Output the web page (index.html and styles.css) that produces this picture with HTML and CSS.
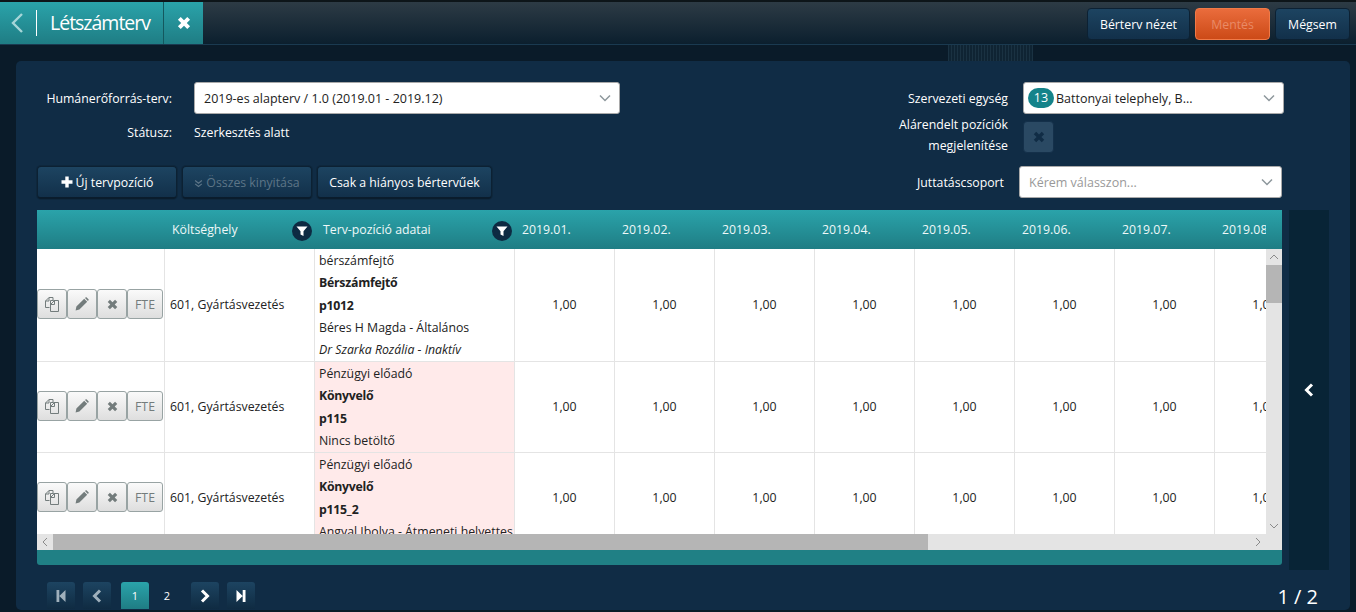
FILE: index.html
```html
<!DOCTYPE html>
<html lang="hu">
<head>
  <meta charset="UTF-8" />
  <title>Létszámterv</title>
  <link rel="stylesheet" href="styles.css">
</head>
<body>
  <svg class="icon-defs" width="0" height="0">
    <symbol id="i-x" viewBox="0 0 12 12"><path d="M.8 3.200 3.200.8 6 3.600 8.800.8l2.400 2.400L8.400 6l2.800 2.800-2.400 2.400L6 8.400l-2.800 2.800-2.400-2.400L3.600 6z" fill="currentColor"/></symbol>
    <symbol id="i-filter" viewBox="0 0 12 12"><path d="M.5 1.500h11L7.500 6.300V11L4.500 9.500V6.300z" fill="currentColor"/></symbol>
    <symbol id="i-copy" viewBox="0 0 16 16"><path d="M5.500 11.500h-4V5l3.500-3.500h4v3M5 1.500V5H1.500M6.500 4.500h3l5 0v11h-8zM6.500 8.500l4-4v4z" fill="none" stroke="currentColor"/></symbol>
    <symbol id="i-pencil" viewBox="0 0 14 14"><path d="M.6 13.400l.8-3.800L9.200 1.800l3 3-7.800 7.800zM10 1l.6-.5c.4-.3.8-.3 1.100 0l1.800 1.800c.3.300.3.7 0 1l-.6.700z" fill="currentColor"/></symbol>
    <symbol id="i-plus" viewBox="0 0 12 12"><path d="M4.300.5h3.400v3.800h3.800v3.400H7.700v3.800H4.300V7.700H.5V4.300h3.800z" fill="currentColor"/></symbol>
    <symbol id="i-double" viewBox="0 0 12 12"><path d="M1.500 2 6 5.500 10.500 2M1.500 6.500 6 10l4.500-3.500" fill="none" stroke="currentColor" stroke-width="1.600"/></symbol>
    <symbol id="i-left" viewBox="0 0 12 14"><path d="M9 1.500 3.500 7 9 12.500" fill="none" stroke="currentColor" stroke-width="3"/></symbol>
    <symbol id="i-right" viewBox="0 0 12 14"><path d="M3 1.500 8.500 7 3 12.500" fill="none" stroke="currentColor" stroke-width="3"/></symbol>
    <symbol id="i-first" viewBox="0 0 12 12"><path d="M1.500 0h2.800v12H1.500zM10.500 0v12L4.300 6z" fill="currentColor"/></symbol>
    <symbol id="i-last" viewBox="0 0 12 12"><path d="M7.700 0h2.800v12H7.700zM1.500 0v12l6.200-6z" fill="currentColor"/></symbol>
    <symbol id="i-caret" viewBox="0 0 12 8"><path d="M1 1.500 6 6.500l5-5" fill="none" stroke="currentColor" stroke-width="1.500"/></symbol>
  </svg>

  <!-- Top bar -->
  <div class="topbar">
    <div class="title-tab">
      <a class="back-btn" href="#"><svg width="16" height="26" viewBox="0 0 16 26"><path d="M13 4 4 13l9 9" fill="none" stroke="currentColor" stroke-width="2.400"/></svg></a>
      <h1>Létszámterv</h1>
      <a class="close-btn" href="#"><svg width="14" height="14"><use href="#i-x"/></svg></a>
    </div>
    <div class="top-actions">
      <button class="dark-btn">Bérterv nézet</button>
      <button class="save-btn">Mentés</button>
      <button class="dark-btn">Mégsem</button>
    </div>
  </div>

  <div class="panel">
    <!-- Filters -->
    <div class="filters">
      <div class="filter-left">
        <div class="field-row">
          <label>Humánerőforrás-terv:</label>
          <div class="select wide"><span>2019-es alapterv / 1.0 (2019.01 - 2019.12)</span><svg width="12" height="8"><use href="#i-caret"/></svg></div>
        </div>
        <div class="field-row status-row">
          <label>Státusz:</label>
          <span class="status-text">Szerkesztés alatt</span>
        </div>
        <div class="button-row">
          <button class="dark-btn new-btn"><svg width="12" height="12"><use href="#i-plus"/></svg>Új tervpozíció</button>
          <button class="dark-btn expand-btn" disabled><svg width="9" height="9"><use href="#i-double"/></svg>Összes kinyitása</button>
          <button class="dark-btn missing-btn">Csak a hiányos bértervűek</button>
        </div>
      </div>
      <div class="filter-right">
        <div class="right-row">
          <label>Szervezeti egység</label>
          <div class="select unit"><span class="unit-text"><b class="badge">13</b>Battonyai telephely, B...</span><svg width="12" height="8"><use href="#i-caret"/></svg></div>
        </div>
        <div class="right-row sub-row">
          <label>Alárendelt pozíciók<br>megjelenítése</label>
          <button class="toggle-btn"><svg width="12" height="12"><use href="#i-x"/></svg></button>
        </div>
        <div class="right-row benefit-row">
          <label>Juttatáscsoport</label>
          <div class="select benefit"><span class="placeholder">Kérem válasszon...</span><svg width="12" height="8"><use href="#i-caret"/></svg></div>
        </div>
      </div>
    </div>

    <!-- Grid -->
    <div class="grid-area">
      <div class="grid">
        <div class="grid-head">
          <div class="row-inner">
            <div class="col-actions"></div>
            <div class="col-cost">Költséghely<span class="filter-dot"><svg width="12" height="12"><use href="#i-filter"/></svg></span></div>
            <div class="col-plan">Terv-pozíció adatai<span class="filter-dot"><svg width="12" height="12"><use href="#i-filter"/></svg></span></div>
            <div class="col-month">2019.01.</div>
            <div class="col-month">2019.02.</div>
            <div class="col-month">2019.03.</div>
            <div class="col-month">2019.04.</div>
            <div class="col-month">2019.05.</div>
            <div class="col-month">2019.06.</div>
            <div class="col-month">2019.07.</div>
            <div class="col-month">2019.08.</div>
          </div>
        </div>
        <div class="grid-middle">
          <div class="grid-rows">
            <div class="row-inner grid-row row-1">
              <div class="col-actions">
                <button class="tool-btn"><svg width="16" height="16"><use href="#i-copy"/></svg></button><button class="tool-btn"><svg width="14" height="14"><use href="#i-pencil"/></svg></button><button class="tool-btn"><svg width="11" height="11"><use href="#i-x"/></svg></button><button class="tool-btn fte">FTE</button>
              </div>
              <div class="col-cost">601, Gyártásvezetés</div>
              <div class="col-plan">
                <div>bérszámfejtő</div>
                <div><b>Bérszámfejtő</b></div>
                <div><b>p1012</b></div>
                <div>Béres H Magda - Általános</div>
                <div><i>Dr Szarka Rozália - Inaktív</i></div>
              </div>
              <div class="col-month">1,00</div><div class="col-month">1,00</div><div class="col-month">1,00</div><div class="col-month">1,00</div><div class="col-month">1,00</div><div class="col-month">1,00</div><div class="col-month">1,00</div><div class="col-month">1,00</div>
            </div>
            <div class="row-inner grid-row row-2">
              <div class="col-actions">
                <button class="tool-btn"><svg width="16" height="16"><use href="#i-copy"/></svg></button><button class="tool-btn"><svg width="14" height="14"><use href="#i-pencil"/></svg></button><button class="tool-btn"><svg width="11" height="11"><use href="#i-x"/></svg></button><button class="tool-btn fte">FTE</button>
              </div>
              <div class="col-cost">601, Gyártásvezetés</div>
              <div class="col-plan missing">
                <div>Pénzügyi előadó</div>
                <div><b>Könyvelő</b></div>
                <div><b>p115</b></div>
                <div>Nincs betöltő</div>
              </div>
              <div class="col-month">1,00</div><div class="col-month">1,00</div><div class="col-month">1,00</div><div class="col-month">1,00</div><div class="col-month">1,00</div><div class="col-month">1,00</div><div class="col-month">1,00</div><div class="col-month">1,00</div>
            </div>
            <div class="row-inner grid-row row-3">
              <div class="col-actions">
                <button class="tool-btn"><svg width="16" height="16"><use href="#i-copy"/></svg></button><button class="tool-btn"><svg width="14" height="14"><use href="#i-pencil"/></svg></button><button class="tool-btn"><svg width="11" height="11"><use href="#i-x"/></svg></button><button class="tool-btn fte">FTE</button>
              </div>
              <div class="col-cost">601, Gyártásvezetés</div>
              <div class="col-plan missing">
                <div>Pénzügyi előadó</div>
                <div><b>Könyvelő</b></div>
                <div><b>p115_2</b></div>
                <div>Angyal Ibolya - Átmeneti helyettes</div>
              </div>
              <div class="col-month">1,00</div><div class="col-month">1,00</div><div class="col-month">1,00</div><div class="col-month">1,00</div><div class="col-month">1,00</div><div class="col-month">1,00</div><div class="col-month">1,00</div><div class="col-month">1,00</div>
            </div>
          </div>
          <div class="vscroll">
            <svg class="arrow" width="10" height="6" viewBox="0 0 10 6"><path d="M1 5l4-4 4 4" fill="none" stroke="#8a8a8a"/></svg>
            <div class="vthumb"></div>
            <svg class="arrow arrow-down" width="10" height="6" viewBox="0 0 10 6"><path d="M1 1l4 4 4-4" fill="none" stroke="#8a8a8a"/></svg>
          </div>
        </div>
        <div class="hscroll">
          <svg class="arrow" width="6" height="10" viewBox="0 0 6 10"><path d="M5 1 1 5l4 4" fill="none" stroke="#8a8a8a"/></svg>
          <div class="hthumb"></div>
          <svg class="arrow" width="6" height="10" viewBox="0 0 6 10"><path d="M1 1l4 4-4 4" fill="none" stroke="#8a8a8a"/></svg>
        </div>
        <div class="grid-foot"></div>
      </div>
      <div class="side-toggle"><svg width="12" height="14"><use href="#i-left"/></svg></div>
    </div>

    <!-- Pager -->
    <div class="pager">
      <div class="pager-btns">
        <button class="page-btn dim"><svg width="12" height="12"><use href="#i-first"/></svg></button>
        <button class="page-btn dim"><svg width="12" height="14"><use href="#i-left"/></svg></button>
        <button class="page-num active">1</button>
        <button class="page-num">2</button>
        <button class="page-btn"><svg width="12" height="14"><use href="#i-right"/></svg></button>
        <button class="page-btn"><svg width="12" height="12"><use href="#i-last"/></svg></button>
      </div>
      <div class="page-count">1 / 2</div>
    </div>
  </div>
</body>
</html>
```

FILE: styles.css
```css
* {
  margin: 0;
  padding: 0;
  box-sizing: border-box;
}

body {
  font-family: "Open Sans", "Noto Sans", sans-serif;
  font-size: 12.3px;
  width: 1356px;
  height: 612px;
  overflow: hidden;
  color: #fff;
  background-color: #0a1b29;
  background-image: repeating-linear-gradient(90deg, #1a3242 0 1px, #0f2433 1px 3px);
  background-size: 85px 16px;
  background-position: 948px 45px;
  background-repeat: no-repeat;
}

button {
  font-family: inherit;
  cursor: pointer;
}

.icon-defs {
  display: block;
  height: 0;
}

/* Top bar */
.topbar {
  display: flex;
  justify-content: space-between;
  height: 45px;
  background: linear-gradient(#2d3b45, #0b1f2e);
  border-top: 2px solid #0d1519;
  border-bottom: 1px solid #1a3a50;
}

.title-tab {
  display: flex;
  align-items: center;
  height: 42px;
  background: linear-gradient(#2aa3aa, #1f7d84);
}

.back-btn {
  display: flex;
  width: 37px;
  padding-left: 9px;
  color: #a6d6d8;
  border-right: 1px solid #fff;
}

.title-tab h1 {
  font-size: 19.500px;
  font-weight: 400;
  width: 127px;
  padding-left: 13px;
  line-height: 42px;
  border-right: 1px solid #14585e;
  letter-spacing: -1px;
  white-space: nowrap;
}

.close-btn {
  display: flex;
  justify-content: center;
  width: 39px;
  color: #fff;
}

.top-actions {
  display: flex;
  gap: 5px;
  padding: 6px 6px 0 0;
}

.dark-btn {
  height: 32px;
  font-size: 12.3px;
  color: #fff;
  border: 1px solid #0c2133;
  border-radius: 4px;
  background: linear-gradient(#1d4461, #12304a);
}

.top-actions .dark-btn:first-child {
  width: 103px;
}

.top-actions .dark-btn:last-child {
  width: 75px;
}

.save-btn {
  width: 75px;
  height: 32px;
  font-size: 12.3px;
  color: #e98a66;
  border: 1px solid #f07a48;
  border-radius: 4px;
  background: linear-gradient(#ea6c3c, #cc4a17);
}

/* Panel */
.panel {
  width: 1334px;
  height: 549px;
  margin: 16px 0 0 16px;
  background-color: #102c45;
  border-radius: 5px;
}

.filters {
  display: flex;
  justify-content: space-between;
  height: 149px;
  padding: 21px 66px 0 21px;
}

.field-row {
  display: flex;
  align-items: center;
  height: 32px;
}

.field-row label {
  width: 135px;
  margin-right: 22px;
  text-align: right;
  white-space: nowrap;
}

.select {
  display: flex;
  align-items: center;
  justify-content: space-between;
  height: 32px;
  padding: 0 8px 0 9px;
  font-size: 12.5px;
  color: #222;
  background-color: #fff;
  border: 1px solid #a9a9a9;
  border-radius: 3px;
}

.select svg {
  color: #8d979c;
}

.select.wide {
  width: 426px;
}

.status-row {
  margin-top: 2px;
  height: 32px;
}

.button-row {
  display: flex;
  gap: 5px;
  margin-top: 18px;
}

.button-row .dark-btn {
  height: 33px;
  border-bottom: 2px solid #0a1c2c;
  box-shadow: 0 0 0 1px #0e273c;
}

.button-row svg {
  margin-right: 3px;
  vertical-align: -1px;
}

.new-btn {
  width: 140px;
}

.expand-btn {
  width: 130px;
  color: #5d7587;
  cursor: default;
}

.missing-btn {
  width: 175px;
}

.filter-right {
  width: 385px;
}

.right-row {
  display: flex;
  align-items: center;
}

.right-row label {
  flex-shrink: 0;
  width: 109px;
  margin-right: 15px;
  text-align: right;
  white-space: nowrap;
}

.select.unit {
  width: 261px;
  padding-left: 4px;
}

.unit-text {
  display: flex;
  align-items: center;
}

.badge {
  display: inline-block;
  width: 26px;
  height: 20px;
  margin-right: 2px;
  font-weight: 400;
  line-height: 20px;
  text-align: center;
  color: #fff;
  background-color: #14838a;
  border-radius: 10px;
}

.sub-row {
  align-items: flex-start;
  line-height: 21px;
}

.toggle-btn {
  display: flex;
  align-items: center;
  justify-content: center;
  width: 31px;
  height: 32px;
  margin-top: 7px;
  color: #102c45;
  border: 1px solid #14304a;
  border-radius: 4px;
  background-color: #2a4963;
}

.benefit-row {
  margin-top: 10px;
}

.benefit-row label {
  width: 105px;
}

.select.benefit {
  width: 263px;
}

.placeholder {
  color: #999;
}

/* Grid */
.grid-area {
  display: flex;
  gap: 7px;
  height: 360px;
  padding-left: 21px;
}

.grid {
  width: 1245px;
  height: 355px;
  border-radius: 0 0 3px 3px;
  overflow: hidden;
}

.row-inner {
  display: flex;
  width: 1300px;
}

.grid-head {
  width: 100%;
  height: 39px;
  background: linear-gradient(#2aa3aa, #1f7d84);
}

.grid-head .row-inner {
  width: 1229px;
  height: 39px;
  overflow: hidden;
  line-height: 39px;
  font-weight: 500;
  color: #eef8f8;
}

.grid-head .col-actions {
  width: 128px;
  border: 0;
}

.grid-head .col-cost {
  position: relative;
  display: block;
  width: 150px;
  padding-left: 7px;
  border: 0;
}

.grid-head .col-plan {
  position: relative;
  width: 200px;
  padding-left: 8px;
  line-height: 39px;
  border: 0;
}

.grid-head .col-month {
  display: block;
  width: 100px;
  padding-left: 7px;
  text-align: left;
  border: 0;
}

.filter-dot {
  position: absolute;
  right: 3px;
  top: 11px;
  display: flex;
  align-items: center;
  justify-content: center;
  width: 20px;
  height: 20px;
  color: #fff;
  background-color: #0d2a42;
  border-radius: 50%;
}

.grid-middle {
  display: flex;
  height: 285px;
  background-color: #fff;
}

.grid-rows {
  width: 1229px;
  overflow: hidden;
}

.grid-row {
  color: #222;
  border-bottom: 1px solid #e4e4e4;
}

.grid-row .col-actions,
.grid-row .col-cost,
.grid-row .col-month {
  padding-bottom: 2px;
}

.row-1 {
  height: 113px;
}

.row-2 {
  height: 91px;
}

.row-3 {
  height: 91px;
}

.col-actions {
  display: flex;
  align-items: center;
  flex-shrink: 0;
  width: 128px;
  border-right: 1px solid #e4e4e4;
}

.col-cost {
  display: flex;
  align-items: center;
  flex-shrink: 0;
  width: 150px;
  padding-left: 5px;
  border-right: 1px solid #e4e4e4;
}

.col-plan {
  flex-shrink: 0;
  width: 200px;
  padding-top: 1px;
  padding-left: 4px;
  line-height: 22.3px;
  white-space: nowrap;
  overflow: hidden;
  border-right: 1px solid #e4e4e4;
}

.grid-head .col-plan {
  padding-top: 0;
}

.col-plan b {
  font-weight: 700;
  letter-spacing: -0.25px;
}

.col-plan.missing {
  background-color: #ffeaea;
}

.col-month {
  display: flex;
  align-items: center;
  justify-content: center;
  flex-shrink: 0;
  width: 100px;
  border-right: 1px solid #e4e4e4;
}

.tool-btn {
  display: flex;
  align-items: center;
  justify-content: center;
  width: 30px;
  height: 30px;
  color: #737c7c;
  border: 1px solid #98a3a3;
  border-radius: 3px;
  background: linear-gradient(#fafafa, #dedede);
}

.tool-btn.fte {
  width: 36px;
  font-size: 12.3px;
}

.vscroll {
  display: flex;
  flex-direction: column;
  align-items: center;
  width: 16px;
  background-color: #e4e4e4;
}

.vscroll .arrow {
  margin: 5px 0;
  flex-shrink: 0;
}

.vthumb {
  width: 16px;
  height: 38px;
  background-color: #b5b5b5;
}

.vscroll .arrow-down {
  margin-top: auto;
}

.hscroll {
  display: flex;
  align-items: center;
  height: 16px;
  padding: 0 21px 0 5px;
  background-color: #e4e4e4;
}

.hthumb {
  width: 875px;
  height: 16px;
  margin: 0 auto 0 5px;
  background-color: #b5b5b5;
}

.grid-foot {
  height: 15px;
  background-color: #208085;
}

.side-toggle {
  display: flex;
  align-items: center;
  justify-content: center;
  width: 40px;
  height: 360px;
  color: #fff;
  background-color: #082436;
}

/* Pager */
.pager {
  display: flex;
  justify-content: space-between;
  height: 40px;
  margin-top: 12px;
  padding: 0 32px 0 31px;
}

.pager-btns {
  display: flex;
}

.page-btn {
  display: flex;
  align-items: center;
  justify-content: center;
  width: 28px;
  height: 27px;
  margin-right: 8px;
  color: #fff;
  border: 0;
  border-radius: 3px 3px 0 0;
  background: linear-gradient(#1d4461, #0f2b42);
}

.page-btn.dim {
  color: #9fb0bc;
}

.page-num {
  width: 28px;
  height: 27px;
  margin: 0 4px 0 0;
  font-size: 11px;
  color: #fff;
  border: 0;
  border-radius: 3px 3px 0 0;
  background: none;
}

.page-num.active {
  margin-left: 2px;
  background: linear-gradient(#2aa3aa, #1f7d84);
}

.page-num + .page-num {
  margin-right: 10px;
}

.page-count {
  font-size: 20px;
  line-height: 27px;
  padding-top: 1px;
}
```
